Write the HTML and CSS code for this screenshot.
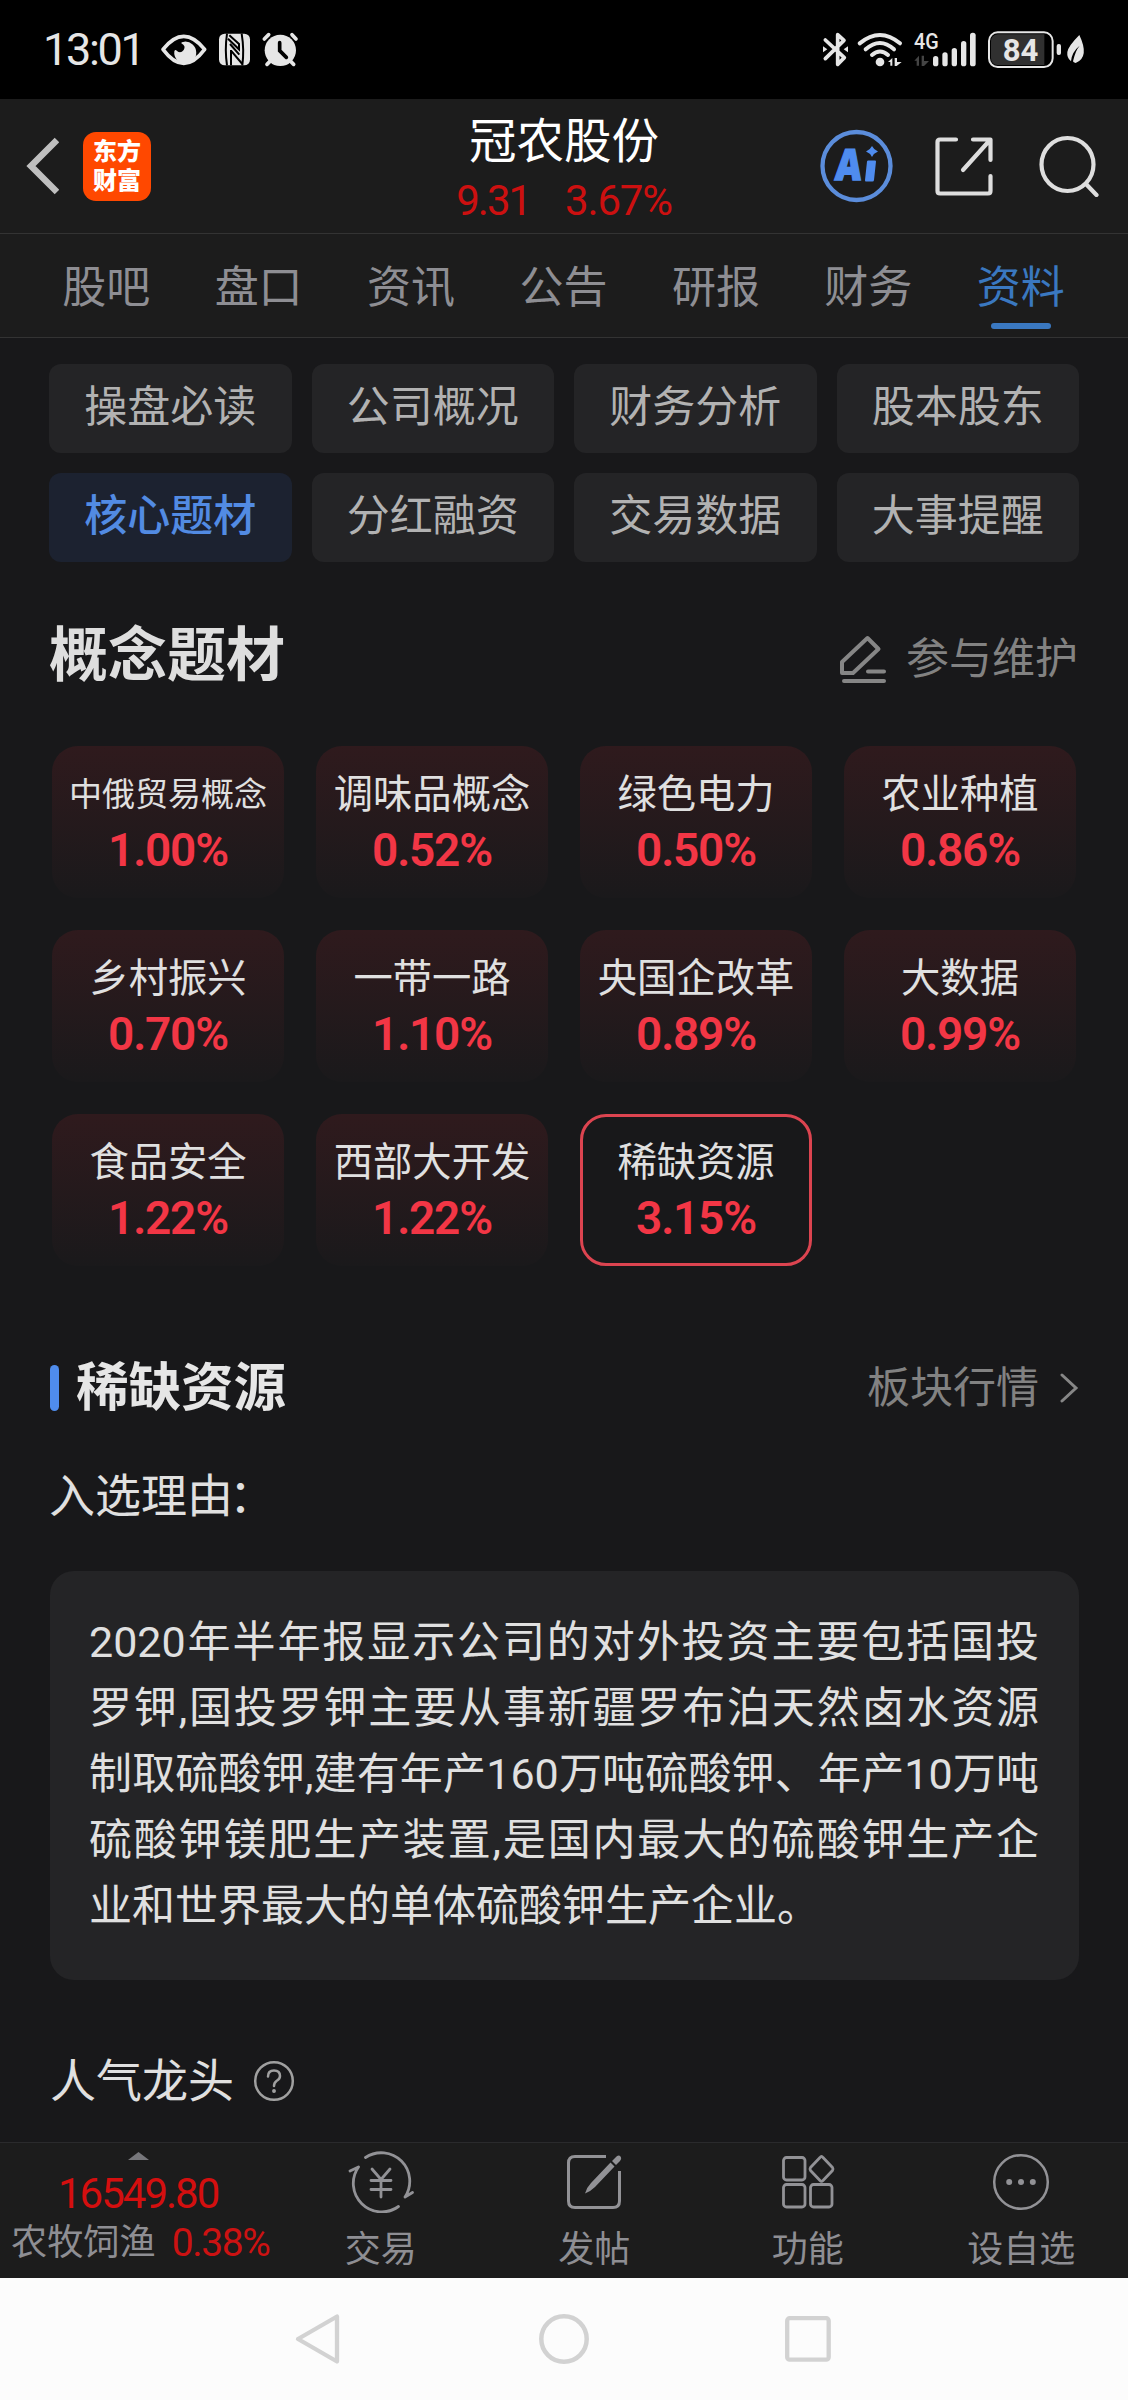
FILE: index.html
```html
<!DOCTYPE html>
<html lang="zh-CN">
<head>
<meta charset="utf-8">
<title>冠农股份</title>
<link rel="stylesheet" href="styles.css">
</head>
<body>
<div class="status">
  <div class="status-left">
    <span class="time">13:01</span>
    <svg width="160" height="60" viewBox="0 0 480 180" fill="#e6e6e6">
      <path d="M39 88Q101 10 164 88Q101 172 39 88Z" fill="none" stroke="#e6e6e6" stroke-width="11" stroke-linejoin="round"/>
      <path d="M103 65A33 33 0 1 1 73 94Q76 86 81 93Q92 102 101 90Q109 78 94 70Q93 65 103 65Z"/>
      <rect x="207" y="41" width="93" height="95" rx="17"/>
      <path d="M231 41Q224 90 231 136M275 41Q283 90 277 136" stroke="#000" stroke-width="6" fill="none"/>
      <path d="M234 56L267 88V72L238 46M243 90V136M243 92L277 132M240 72L268 104" stroke="#000" stroke-width="6" fill="none"/>
      <circle cx="391" cy="91" r="47"/>
      <path d="M343 57L356 44M426 44L438 57M351 133L362 122M420 122L431 133" stroke="#e6e6e6" stroke-width="11" stroke-linecap="round"/>
      <path d="M389 68V92L409 112" fill="none" stroke="#000" stroke-width="11" stroke-linecap="round"/>
    </svg>
  </div>
  <svg class="status-right" width="290" height="60" viewBox="0 0 870 180" fill="#e6e6e6">
    <path d="M46 60L103 113L83 133V44L102 61L46 116" fill="none" stroke="#e6e6e6" stroke-width="11" stroke-linecap="round" stroke-linejoin="round"/>
    <path d="M39 79L52 88L39 97ZM114 79L101 88L114 97Z"/>
    <g fill="none" stroke="#e6e6e6" stroke-width="12" stroke-linecap="round">
      <path d="M149 70Q210 20 270 70"/><path d="M167 88Q210 50 252 88"/><path d="M186 105Q210 84 234 105"/>
    </g>
    <circle cx="210" cy="126" r="13"/>
    <path d="M234 126L247 114V137H241V126ZM254 114H261V126H275L260 138H254Z"/>
    <text x="312" y="88" class="net" textLength="74" lengthAdjust="spacingAndGlyphs">4G</text>
    <path d="M313 122L327 107V137H320V122ZM335 107H342V123H357L342 138H335Z" fill="#444"/>
    <g><rect x="369" y="108" width="16" height="31" rx="8"/><rect x="397" y="97" width="16" height="42" rx="8"/><rect x="425" y="84" width="16" height="55" rx="8"/><rect x="453" y="63" width="16" height="76" rx="8"/><rect x="480" y="38" width="17" height="101" rx="8"/></g>
    <rect x="537" y="37" width="191" height="104" rx="26" fill="#000" stroke="#e6e6e6" stroke-width="6"/>
    <path d="M563 43H703V135H563Q543 133 543 113V65Q543 45 563 43Z" fill="#303030"/>
    <text x="578" y="122" class="battery" textLength="107" lengthAdjust="spacingAndGlyphs">84</text>
    <rect x="740" y="72" width="13" height="33" rx="6"/>
    <path d="M808 45Q840 112 797 129Q790 128 789 124Q796 92 809 77Q785 96 783 124Q770 114 772 96Q775 78 808 45Z"/>
  </svg>
</div>

<header class="header">
  <div class="header-left">
    <svg width="34" height="58" viewBox="0 0 34 58"><path d="M32 3L6 29L32 55" fill="none" stroke="#bfbfbf" stroke-width="6.500"/></svg>
    <div class="logo"><span>东方</span><span>财富</span></div>
  </div>
  <div class="stock">
    <h1>冠农股份</h1>
    <div class="quote"><span>9.31</span><span>3.67%</span></div>
  </div>
  <div class="header-right">
    <svg width="73" height="74" viewBox="0 0 73 74">
      <ellipse cx="36.500" cy="37" rx="34" ry="34" fill="none" stroke="#5b8ddb" stroke-width="4.300"/>
      <text transform="translate(14.500 50.500) skewX(-5)" class="ai" textLength="26" lengthAdjust="spacingAndGlyphs">A</text>
      <path d="M47 32.500Q47.200 31.500 48.200 31.500H55Q56 31.500 56 32.500L54 51Q53.800 52.500 52.500 52.500H46Q44.800 52.500 45 51ZM52 17q2 4 6 5.500q-4 1.500-6 5.500q-2-4-6-5.500q4-1.500 6-5.500z" fill="#4f8cee"/>
    </svg>
    <svg width="58" height="60" viewBox="0 0 58 60" fill="none" stroke="#dedede" stroke-width="4.200" stroke-linecap="round" stroke-linejoin="round"><path d="M21 3.500H5Q2.500 3.500 2.500 6V55Q2.500 57.500 5 57.500H53Q55.500 57.500 55.500 55V40M38 3.500H55.500V24M55 4L28 34"/></svg>
    <svg width="60" height="62" viewBox="0 0 60 62" fill="none" stroke="#dedede" stroke-width="4.200" stroke-linecap="round"><ellipse cx="28.500" cy="29.500" rx="26" ry="26.500"/><path d="M47 49L57.500 60"/></svg>
  </div>
</header>

<nav class="tabs">
  <span>股吧</span><span>盘口</span><span>资讯</span><span>公告</span><span>研报</span><span>财务</span><span class="active">资料</span>
</nav>

<main class="content">
  <div class="pills">
    <span>操盘必读</span><span>公司概况</span><span>财务分析</span><span>股本股东</span>
    <span class="active">核心题材</span><span>分红融资</span><span>交易数据</span><span>大事提醒</span>
  </div>

  <div class="topic-head">
    <h2>概念题材</h2>
    <div class="link">
      <svg width="48" height="48" viewBox="0 0 48 48" fill="none" stroke="#868686" stroke-width="4" stroke-linecap="round" stroke-linejoin="round"><path d="M3 27L28.500 3L39.500 14L14 38H3ZM29 36.500H45M5 46H45"/></svg>
      <span>参与维护</span>
    </div>
  </div>

  <div class="cards">
    <div class="card"><span class="name small">中俄贸易概念</span><b>1.00%</b></div>
    <div class="card"><span class="name">调味品概念</span><b>0.52%</b></div>
    <div class="card"><span class="name">绿色电力</span><b>0.50%</b></div>
    <div class="card"><span class="name">农业种植</span><b>0.86%</b></div>
    <div class="card"><span class="name">乡村振兴</span><b>0.70%</b></div>
    <div class="card"><span class="name">一带一路</span><b>1.10%</b></div>
    <div class="card"><span class="name">央国企改革</span><b>0.89%</b></div>
    <div class="card"><span class="name">大数据</span><b>0.99%</b></div>
    <div class="card"><span class="name">食品安全</span><b>1.22%</b></div>
    <div class="card"><span class="name">西部大开发</span><b>1.22%</b></div>
    <div class="card selected"><span class="name">稀缺资源</span><b>3.15%</b></div>
  </div>

  <div class="section-head">
    <h3>稀缺资源</h3>
    <div class="link">
      <span>板块行情</span>
      <svg width="20" height="30" viewBox="0 0 20 30" fill="none" stroke="#868686" stroke-width="3" stroke-linecap="round"><path d="M3 2L17 15L3 28"/></svg>
    </div>
  </div>
  <p class="label">入选理由<span class="colon">：</span></p>
  <div class="reason">
    <p>2020年半年报显示公司的对外投资主要包括国投</p>
    <p>罗钾,国投罗钾主要从事新疆罗布泊天然卤水资源</p>
    <p>制取硫酸钾,建有年产160万吨硫酸钾、年产10万吨</p>
    <p>硫酸钾镁肥生产装置,是国内最大的硫酸钾生产企</p>
    <p class="last">业和世界最大的单体硫酸钾生产企业。</p>
  </div>
  <div class="leader">
    <span>人气龙头</span>
    <svg width="42" height="42" viewBox="0 0 42 42" fill="none" stroke="#a0a0a0" stroke-width="2.500" stroke-linecap="round"><circle cx="21" cy="21" r="18.800"/><path d="M15 16.500Q15 10.500 21 10.500Q27 10.500 27 16Q27 19 23.500 21Q21 22.800 21 26"/><circle cx="21" cy="31" r="1.200" fill="#a0a0a0" stroke-width="1.500"/></svg>
  </div>
</main>

<footer class="toolbar">
  <div class="index">
    <i class="caret"></i>
    <div class="points">16549.80</div>
    <div class="sector"><span>农牧饲渔</span><em>0.38%</em></div>
  </div>
  <div class="tool">
    <svg width="66" height="62" viewBox="0 0 66 62" fill="none" stroke="#929296" stroke-width="2.800" stroke-linecap="round" stroke-linejoin="round"><path d="M17.500 6.500A28.500 28.500 0 0 1 57 46L64.500 41.500M50.500 55.500A28.500 28.500 0 0 1 10.500 16L2 20"/><path d="M24 18L33 28.500L42 18M23 29.500H43M23 38.500H43M33 28.500V46"/></svg>
    <span>交易</span>
  </div>
  <div class="tool">
    <svg width="66" height="62" viewBox="0 0 66 62" fill="none" stroke="#929296" stroke-width="3"><path d="M45 5.500H14Q7.500 5.500 7.500 12V50Q7.500 56.500 14 56.500H52Q58.500 56.500 58.500 50V20"/><path d="M24 42.500Q26 36 30 32L49.500 11.500L53.500 15.500L34 36Q30 40 24 42.500ZM51 10L55.500 5.500Q58 3.500 59.500 5.500Q61 7.500 59 10L55 14Z" fill="#929296" stroke="none"/></svg>
    <span>发帖</span>
  </div>
  <div class="tool">
    <svg width="66" height="62" viewBox="0 0 66 62" fill="none" stroke="#929296" stroke-width="2.800" stroke-linejoin="round"><rect x="8.500" y="6.500" width="21.500" height="22.500" rx="3"/><rect x="8.500" y="33.500" width="21.500" height="22.500" rx="3"/><rect x="35.500" y="33.500" width="21.500" height="22.500" rx="3"/><path d="M45 6.500Q46.500 4.500 48 6.500L57.500 16.500Q58.500 18 57.500 19.500L48 29.500Q46.500 31 45 29.500L35.500 19.500Q34.500 18 35.500 16.500Z"/></svg>
    <span>功能</span>
  </div>
  <div class="tool">
    <svg width="66" height="62" viewBox="0 0 66 62" fill="#929296"><circle cx="33" cy="31" r="26.800" fill="none" stroke="#929296" stroke-width="2.500"/><circle cx="21.200" cy="31" r="3"/><circle cx="33" cy="31" r="3"/><circle cx="44.800" cy="31" r="3"/></svg>
    <span>设自选</span>
  </div>
</footer>

<div class="sysnav">
  <svg width="50" height="52" viewBox="0 0 50 52" fill="none" stroke="#d2d2d2" stroke-width="4.300" stroke-linejoin="round"><path d="M42 3.500V48.500L3 26Z"/></svg>
  <svg width="50" height="52" viewBox="0 0 50 52" fill="none" stroke="#d2d2d2" stroke-width="4.500"><circle cx="25" cy="26" r="22.700"/></svg>
  <svg width="50" height="52" viewBox="0 0 50 52" fill="none" stroke="#d2d2d2" stroke-width="4.300"><rect x="4.200" y="5.200" width="41.500" height="41.500" rx="2.500"/></svg>
</div>
</body>
</html>
```

FILE: styles.css
```css
* { box-sizing: border-box; margin: 0; padding: 0; }
body {
  width: 1128px;
  background: #18181a;
  color: #e0e0e0;
  font-family: Roboto, "Noto Sans CJK SC", sans-serif;
}
svg { display: block; flex: none; }

.status {
  height: 99px;
  background: #000;
  display: flex;
  justify-content: space-between;
  padding: 20px 28px 0 43px;
}
.status-left { display: flex; }
.time {
  width: 107px;
  font-size: 45px;
  line-height: 60px;
  letter-spacing: -2.3px;
  color: #e6e6e6;
  white-space: nowrap;
}
.net { font-size: 64px; font-weight: 500; }
.battery { font-size: 94px; font-weight: 700; }

.header {
  height: 135px;
  background: #1c1c1c;
  border-bottom: 1px solid #333;
  display: grid;
  grid-template-columns: 1fr auto 1fr;
}
.header-left { display: flex; align-items: center; padding-left: 25px; }
.logo {
  margin-left: 24px;
  width: 68px;
  height: 69px;
  border-radius: 13px;
  background: #ff4800;
  color: #fff;
  font-weight: 900;
  font-size: 24px;
  line-height: 29px;
  padding-top: 6px;
  display: flex;
  flex-direction: column;
  align-items: center;
}
.stock { padding-top: 14px; text-align: center; }
.stock h1 { font-size: 47.5px; line-height: 59px; font-weight: 400; color: #fff; }
.quote {
  display: flex;
  justify-content: center;
  gap: 35px;
  font-size: 42px;
  line-height: 57px;
  letter-spacing: -1.2px;
  color: #cc1010;
}
.quote span:first-child { letter-spacing: -2px; }
.header-right { display: flex; justify-content: flex-end; align-items: center; padding-right: 29px; }
.header-right svg:nth-child(2) { margin: 0 46px 0 42px; }
.ai { font: 900 43px "Noto Sans", sans-serif; fill: #4f8cee; stroke: #4f8cee; stroke-width: 1.5px; }

.tabs {
  height: 104px;
  background: #1c1c1c;
  border-bottom: 1px solid #333;
  padding: 0 31px 0 30px;
  display: grid;
  grid-template-columns: repeat(7, 1fr);
  justify-items: center;
}
.tabs span { position: relative; font-size: 44px; line-height: 108px; color: #8e8e93; }
.tabs .active { color: #3a78c0; }
.tabs .active::after {
  content: "";
  position: absolute;
  left: 14px;
  right: 14px;
  top: 89px;
  height: 6px;
  border-radius: 3px;
  background: #3a78c0;
}

.content { height: 1804px; padding: 26px 49px 0; }
.pills { display: grid; grid-template-columns: repeat(4, 1fr); gap: 20px; }
.pills span {
  height: 89px;
  border-radius: 12px;
  background: #242426;
  color: #b2b2b2;
  font-size: 43px;
  line-height: 86px;
  text-align: center;
}
.pills .active { background: #1c2230; color: #528be3; font-weight: 500; }

.topic-head, .section-head { display: flex; justify-content: space-between; align-items: center; }
.topic-head { height: 80px; margin-top: 54px; }
.topic-head h2 { font-size: 59px; line-height: 80px; font-weight: 700; color: #dedede; }
.link { display: flex; align-items: center; font-size: 43px; line-height: 60px; color: #828282; }
.topic-head .link { gap: 19px; margin: 6px 1px 0 0; }

.cards {
  display: grid;
  grid-template-columns: repeat(4, 232px);
  column-gap: 32px;
  row-gap: 32px;
  margin: 50px 0 0 3px;
}
.card {
  height: 152px;
  border-radius: 26px;
  background: linear-gradient(#2f1a1d, #1a191b);
  display: flex;
  flex-direction: column;
  align-items: center;
  gap: 15px;
  padding-top: 29px;
}
.name { font-size: 39.3px; line-height: 40px; white-space: nowrap; }
.name.small { font-size: 33px; }
.card b { font-size: 46px; line-height: 40px; font-weight: 600; letter-spacing: -1.2px; color: #f23645; }
.card.selected { background: none; border: 3px solid #dc4450; padding-top: 26px; }

.section-head { height: 60px; margin: 92px 0 0 1px; }
.section-head h3 {
  display: flex;
  align-items: center;
  gap: 17px;
  font-size: 52.5px;
  line-height: 60px;
  font-weight: 700;
  color: #e6e6e6;
}
.section-head h3::before { content: ""; width: 9px; height: 46px; border-radius: 4.5px; background: #4f8cec; }
.section-head .link { gap: 20px; margin-top: -1px; }

.label { margin: 48px 0 0; font-size: 46px; line-height: 60px; }
.colon { margin-left: -4px; }
.reason {
  margin: 45px 0 0 1px;
  height: 409px;
  padding: 38px 40px 0 39px;
  border-radius: 24px;
  background: #242426;
  font-size: 43px;
  line-height: 66px;
}
.reason p { white-space: nowrap; text-align: justify; text-align-last: justify; }
.reason .last { text-align-last: left; }
.leader { display: flex; align-items: center; gap: 19px; margin: 71px 0 0 1px; font-size: 46px; line-height: 60px; }

.toolbar {
  height: 136px;
  background: #1c1c1c;
  border-top: 1px solid #2a2a2c;
  display: grid;
  grid-template-columns: 274px repeat(4, 1fr);
  color: #8e8e93;
}
.index { padding-top: 9px; }
.caret {
  display: block;
  width: 21px;
  height: 8px;
  margin-left: 128px;
  background: #77777b;
  clip-path: polygon(50% 0, 100% 100%, 0 100%);
}
.points { padding-left: 58px; margin-top: 12px; font-size: 42px; line-height: 44px; letter-spacing: -2px; color: #d40f0f; }
.sector { display: flex; gap: 16px; padding-left: 11px; margin-top: 5px; font-size: 36.2px; line-height: 44px; white-space: nowrap; }
.sector em { font-style: normal; font-size: 39px; letter-spacing: -1.4px; color: #cc1212; }
.tool { display: flex; flex-direction: column; align-items: center; padding-top: 8px; }
.tool span { font-size: 36px; line-height: 40px; margin-top: 17px; }

.sysnav { height: 122px; background: #fcfcfc; display: flex; justify-content: center; gap: 194px; padding-top: 35px; }
```
